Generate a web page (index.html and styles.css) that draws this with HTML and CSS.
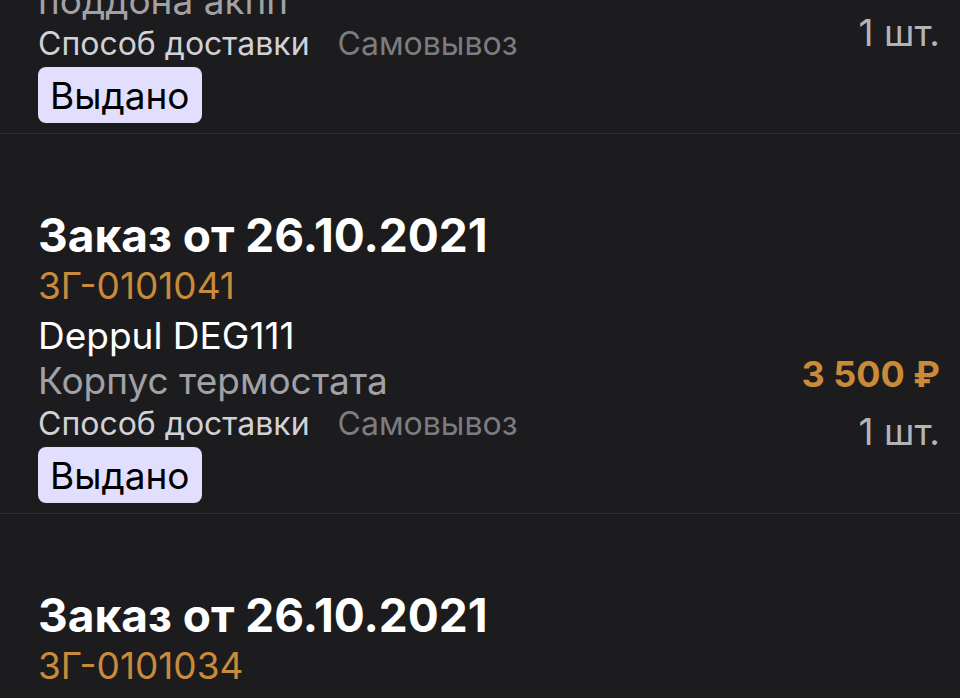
FILE: index.html
```html
<!DOCTYPE html>
<html lang="ru">
<head>
    <meta charset="UTF-8">
    <meta name="viewport" content="width=device-width, initial-scale=1.0">
    <title>Мои заказы</title>
    <link rel="stylesheet" href="styles.css">
</head>
<body>
    <div class="orders">
        <div class="order">
            <div class="order-head">
                <div class="order-title">Заказ от 26.10.2021</div>
                <div class="order-code">ЗГ-0101052</div>
            </div>
            <div class="order-body">
                <div class="order-info">
                    <div class="order-name">Deppul DE1402</div>
                    <div class="order-desc">Прокладка масляного<br>поддона акпп</div>
                    <div class="order-delivery">
                        <span class="delivery-label">Способ доставки</span>
                        <span class="delivery-value">Самовывоз</span>
                    </div>
                    <span class="order-status">Выдано</span>
                </div>
                <div class="order-side">
                    <div class="order-price">1 200 ₽</div>
                    <div class="order-qty">1 шт.</div>
                </div>
            </div>
        </div>

        <div class="order">
            <div class="order-head">
                <div class="order-title">Заказ от 26.10.2021</div>
                <div class="order-code">ЗГ-0101041</div>
            </div>
            <div class="order-body">
                <div class="order-info">
                    <div class="order-name">Deppul DEG111</div>
                    <div class="order-desc">Корпус термостата</div>
                    <div class="order-delivery">
                        <span class="delivery-label">Способ доставки</span>
                        <span class="delivery-value">Самовывоз</span>
                    </div>
                    <span class="order-status">Выдано</span>
                </div>
                <div class="order-side">
                    <div class="order-price">3 500 ₽</div>
                    <div class="order-qty">1 шт.</div>
                </div>
            </div>
        </div>

        <div class="order">
            <div class="order-head">
                <div class="order-title">Заказ от 26.10.2021</div>
                <div class="order-code">ЗГ-0101034</div>
            </div>
            <div class="order-body">
                <div class="order-info">
                    <div class="order-name">Deppul DEA310</div>
                    <div class="order-desc">Фильтр масляный</div>
                    <div class="order-delivery">
                        <span class="delivery-label">Способ доставки</span>
                        <span class="delivery-value">Самовывоз</span>
                    </div>
                    <span class="order-status">Выдано</span>
                </div>
                <div class="order-side">
                    <div class="order-price">850 ₽</div>
                    <div class="order-qty">1 шт.</div>
                </div>
            </div>
        </div>
    </div>
</body>
</html>
```

FILE: styles.css
```css
body, html {
    margin: 0;
    padding: 0;
    height: 100%;
    overflow: hidden;
    background-color: #1c1c1e;
    font-family: Inter, "Noto Sans", sans-serif;
    color: #ffffff;
}
.orders {
    margin-top: -285px;
}
.order {
    padding: 75px 20px 10px 38px;
    border-bottom: 1px solid #2c2c2e;
}
.order-title {
    font-size: 46px;
    font-weight: 700;
    line-height: 52px;
}
.order-code {
    font-size: 37px;
    line-height: 49px;
    color: #c98a3a;
}
.order-body {
    display: flex;
    align-items: center;
    justify-content: space-between;
}
.order-name {
    font-size: 37px;
    line-height: 51px;
}
.order-desc {
    font-size: 37px;
    line-height: 39px;
    color: #a1a1a6;
}
.order-delivery {
    font-size: 32px;
    line-height: 47px;
    display: flex;
    gap: 28px;
}
.delivery-label {
    color: #d1d1d6;
}
.delivery-value {
    color: #7c7c80;
}
.order-status {
    display: inline-block;
    padding: 0 12px;
    height: 56px;
    line-height: 57px;
    font-size: 37px;
    color: #000000;
    background-color: #e1defe;
    border-radius: 8px;
}
.order-side {
    display: flex;
    flex-direction: column;
    align-items: flex-end;
    gap: 14px;
    padding-bottom: 7px;
}
.order-price {
    font-size: 36px;
    font-weight: 700;
    line-height: 44px;
    color: #c98a3a;
}
.order-qty {
    font-size: 37px;
    line-height: 44px;
    color: #b4b4b8;
}
```
